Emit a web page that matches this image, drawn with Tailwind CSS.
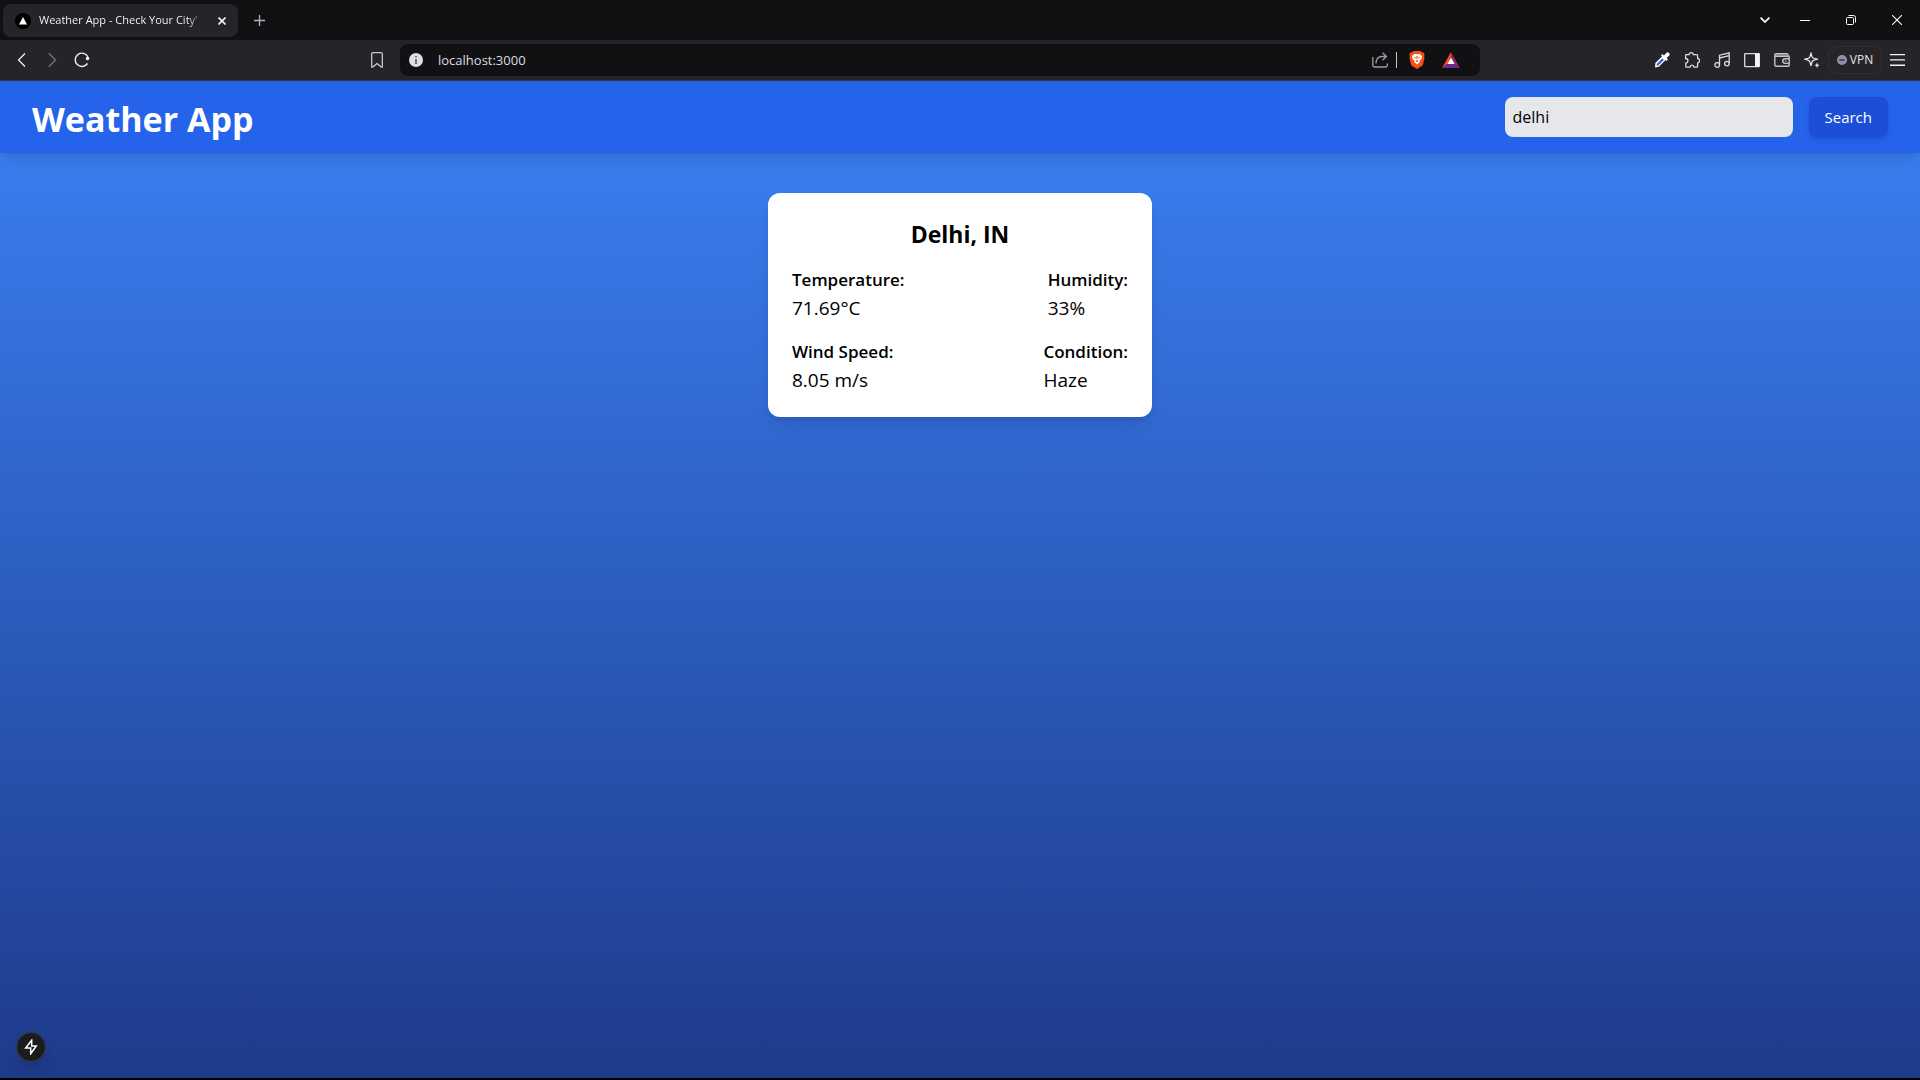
<!DOCTYPE html>
<html lang="en">
<head>
<meta charset="utf-8">
<meta name="viewport" content="width=device-width, initial-scale=1">
<title>Weather App - Check Your City's Weather</title>
<script src="https://cdn.jsdelivr.net/npm/@tailwindcss/browser@4"></script>
</head>
<body class="flex min-h-screen flex-col bg-black font-['Open_Sans','Noto_Sans',sans-serif] text-black">

<!-- Tab strip -->
<div class="flex h-10 items-center bg-[#111113] pl-[3px] text-white">
  <div class="mb-[-1px] flex h-[33px] w-[235px] items-center rounded-lg bg-[#252529] pl-3">
    <svg class="size-4 shrink-0" viewBox="0 0 16 16"><circle cx="8" cy="8" r="8" fill="#000"/><path d="M8 4l4 7.500H4z" fill="#fff"/></svg>
    <span class="ml-2 w-[165px] overflow-hidden whitespace-nowrap bg-linear-to-r from-white from-90% to-transparent bg-clip-text text-[11px] font-medium text-transparent">Weather App - Check Your City'</span>
    <button aria-label="Close tab" class="ml-2 flex size-5 items-center justify-center">
      <svg class="size-2" viewBox="0 0 8 8" stroke="#f4f4f5" stroke-width="1.600"><path d="M.5.5l7 7M7.500.5l-7 7"/></svg>
    </button>
  </div>
  <button aria-label="New tab" class="ml-[9px] flex size-6 items-center justify-center">
    <svg class="size-[11px]" viewBox="0 0 11 11" stroke="#b4b4b8" stroke-width="1.300"><path d="M5.500 0v11M0 5.500h11"/></svg>
  </button>
  <div class="ml-auto flex h-full">
    <button aria-label="Search tabs" class="flex w-[34px] items-center justify-center"><svg class="h-[6px] w-[10px]" viewBox="0 0 10 6" fill="none" stroke="#fff" stroke-width="1.700"><path d="M.6.6L5 5 9.400.6"/></svg></button>
    <button aria-label="Minimize" class="flex w-[46px] items-center justify-center"><svg class="h-[2px] w-[10px]" viewBox="0 0 10 2"><path d="M0 1h10v1H0z" fill="#fff"/></svg></button>
    <button aria-label="Restore" class="flex w-[46px] items-center justify-center"><svg class="size-[10px]" viewBox="0 0 10 10" fill="none" stroke="#fff"><rect x=".5" y="2.500" width="7" height="7" rx="1"/><path d="M2.500.5h5q2 0 2 2v5"/></svg></button>
    <button aria-label="Close" class="flex w-[46px] items-center justify-center"><svg class="size-[10px]" viewBox="0 0 10 10" stroke="#fff" stroke-width="1.100"><path d="M0 0l10 10M10 0L0 10"/></svg></button>
  </div>
</div>

<!-- Toolbar -->
<div class="flex h-[41px] items-center border-b border-[#37373c] bg-[#252529] text-[#e4e4e8]">
  <div class="flex w-[400px] shrink-0 items-center pl-[7px] pr-2">
    <button aria-label="Back" class="flex w-[30px] justify-center"><svg class="size-4" viewBox="0 0 16 16" fill="none" stroke="#f0f0f2" stroke-width="1.300"><path d="M11 1.500L4.500 8l6.500 6.500"/></svg></button>
    <button aria-label="Forward" class="flex w-[30px] justify-center"><svg class="size-4" viewBox="0 0 16 16" fill="none" stroke="#77777c" stroke-width="1.300"><path d="M5 1.500L11.500 8 5 14.500"/></svg></button>
    <button aria-label="Reload" class="flex w-[30px] justify-center"><svg class="size-4" viewBox="0 0 16 16" fill="none" stroke="#ececf0" stroke-width="1.400"><path d="M14 5A6.700 6.700 0 1 0 13.500 11.500"/><circle cx="13.600" cy="6.500" r="1.800" fill="#f4f4f6" stroke="none"/></svg></button>
    <button aria-label="Bookmark this page" class="ml-auto flex w-[30px] justify-center"><svg class="size-4" viewBox="0 0 16 16" fill="none" stroke="#c9c9cd" stroke-width="1.300" stroke-linejoin="round"><path d="M2.700 2q0-1.300 1.300-1.300h8q1.300 0 1.300 1.300v13.200h-.8L8 11.500l-4.500 3.700h-.8z"/></svg></button>
  </div>
  <div class="flex h-8 min-w-0 flex-1 items-center rounded-lg bg-[#111113] pl-[9px] pr-5">
    <svg class="size-[14px] shrink-0" viewBox="0 0 14 14"><circle cx="7" cy="7" r="7" fill="#dedee4"/><path d="M6.200 3h1.600v1.600H6.200zM6.200 6h1.600v5H6.200z" fill="#55555c"/></svg>
    <input aria-label="Address" value="localhost:3000" class="ml-[15px] min-w-0 flex-1 bg-transparent pt-px text-[13px] text-[#dcdce2] outline-none">
    <button aria-label="Share" class="mr-2"><svg class="size-4" viewBox="0 0 16 16" fill="none" stroke="#9d9da1" stroke-width="1.300"><path d="M.8 5v8q0 2 2 2h10.500q2 0 2-2v-1.500"/><path d="M4 11.500Q4 4.500 10 4.500h4M10.500.8l4 3.700-4 3.700"/></svg></button>
    <span class="h-4 w-px bg-[#c4c4c8]"></span>
    <button aria-label="Brave Shields" class="ml-3"><svg class="h-[18px] w-4" viewBox="0 0 16 18"><path d="M4.500 0h7l1.600 1.500 1.400.1 1.200 2-.7 1.300.6 1.500-1.500 6.500q-.4 1.400-1.700 2.400L8 18l-4.400-2.700Q2.300 14.300 1.900 12.900L.4 6.400 1 4.900.3 3.600l1.200-2 1.400-.1z" fill="#fb4f12"/><path d="M8 3.200l2.200-.4 2.900 2.500-.6 2.500-2 2.100.4 1.200L8 13.600l-2.900-2.500.4-1.200-2-2.100-.6-2.500 2.900-2.500z" fill="#fff"/><path d="M4.300 5.800l2.600.7-.5 1.300zM11.700 5.800l-2.600.7.5 1.300zM7.300 5h1.400L8.400 8.500h-.8zM6.300 10L8 9.300 9.700 10 8 11.300z" fill="#fb4f12"/></svg></button>
    <button aria-label="Brave Rewards" class="ml-[17px]"><svg class="h-4 w-[18px]" viewBox="0 0 18 16"><path d="M9 0L0 16l5.500-4L9 5z" fill="#ff4724"/><path d="M9 0l9 16-5.500-4L9 5z" fill="#9e1f63"/><path d="M0 16h18l-5.500-4h-7z" fill="#662d91"/><path d="M9 5.500L12.700 12H5.300z" fill="#fff"/></svg></button>
  </div>
  <div class="flex w-[440px] shrink-0 items-center justify-end pr-[7px]">
    <button aria-label="Color picker" class="flex w-[30px] justify-center"><svg class="size-4" viewBox="0 0 16 16"><path d="M8.200 4.200l3.600 3.600-7 7L1 15.600 1.400 11z" fill="#fff"/><path d="M8.300 6.500l1.500 1.500-5.300 5.300-2 .4.400-2z" fill="#3455d0"/><path d="M7 3.500l1.500-1.400 1.400 1.300L12.500.8q1.500-1 2.500.2 1.300 1.300.2 2.600l-2.500 2.500 1.200 1.400-1.400 1.400z" fill="#fff"/></svg></button>
    <button aria-label="Extensions" class="flex w-[30px] justify-center"><svg class="size-4" viewBox="0 0 16 16" fill="none" stroke="#dcdce0" stroke-width="1.300" stroke-linejoin="round"><path d="M1.800 2.700h3.400q-.1-2 2-2t2 2h3.400q1 0 1 1V6.500q2 .3 2 2.200t-2 2.200v3.300q0 1-1 1H10q-.3-2-2-2t-2 2H2.800q-1 0-1-1v-3q2.200-.5 2.200-2.500T1.500 6.500z"/></svg></button>
    <button aria-label="Media controls" class="flex w-[30px] justify-center"><svg class="size-4" viewBox="0 0 16 16" fill="none" stroke="#dcdce0" stroke-width="1.300"><path d="M5.500 13V3.200l9.700-2.400v10.500M5.500 6l9.700-2.300"/><circle cx="3.200" cy="13" r="2.300"/><circle cx="12.900" cy="11.600" r="2.300"/></svg></button>
    <button aria-label="Sidebar" class="flex w-[30px] justify-center"><svg class="size-4" viewBox="0 0 16 16"><rect x=".7" y="1.700" width="14.600" height="13" rx=".6" fill="none" stroke="#dcdce0" stroke-width="1.300"/><path d="M11 1.500h4.500v13.300H11z" fill="#f4f4f6"/></svg></button>
    <button aria-label="Wallet" class="flex w-[30px] justify-center"><svg class="size-4" viewBox="0 0 16 16" fill="none" stroke="#c4c4c8" stroke-width="1.400"><path d="M15 5.500V4.200H1M14 4V3q0-1.300-1.300-1.300H2.200Q.8 1.700.8 3v9.800q0 1.500 1.400 1.500h11.500q1.500 0 1.500-1.500V5.500q0-1.300-1.200-1.300M15 6.800h-4q-2.300.3-2.300 2.300t2.300 2.300h4M11 9.100h1.500"/><path d="M1.500 2.300h12.500v1.500H1.500z" fill="#9a9a9e" stroke="none"/></svg></button>
    <button aria-label="Leo AI" class="mr-[1px] flex w-[30px] justify-center"><svg class="size-4" viewBox="0 0 16 16" fill="none" stroke="#e8e8ec" stroke-width="1.300" stroke-linejoin="round"><path d="M7 .8Q8 5.600 9 6t4.500 1.200Q10 8.200 9 8.700T7 13.500Q6 9.300 5 8.700T.7 7.200Q4 6.500 5 6T7 .8z"/><path d="M13 10.500l.8 1.900 1.900.8-1.900.8-.8 1.900-.8-1.900-1.900-.8 1.900-.8z" fill="#e8e8ec" stroke="none"/></svg></button>
    <button class="flex h-7 w-[54px] items-center justify-center gap-[3px] rounded-lg border border-[#303034] text-[12px]"><svg class="size-[10px]" viewBox="0 0 10 10"><circle cx="5" cy="5" r="5" fill="#8f90a6"/><path d="M2.300 4.300h5.400v1.400H2.300z" fill="#303038"/></svg>VPN</button>
    <button aria-label="Menu" class="flex w-[31px] justify-center"><svg class="h-3 w-[15px]" viewBox="0 0 15 12"><path d="M0 0h15v1.300H0zM0 5.300h15v1.300H0zM0 10.600h15v1.300H0z" fill="#f4f4f6"/></svg></button>
  </div>
</div>

<!-- Page -->
<div class="relative mb-[2px] flex-1 bg-[linear-gradient(to_bottom,#3b82f6,#1e3a8a)]">
  <header class="flex h-[72px] items-center justify-between bg-[#2563eb] px-8 shadow-lg">
    <h1 class="pt-1 text-[34px] leading-10 font-bold text-white">Weather App</h1>
    <form class="flex gap-4" onsubmit="return false">
      <input type="text" aria-label="City" value="delhi" class="h-10 w-72 rounded-lg bg-[#e5e7eb] p-2 text-base text-black outline-none">
      <button class="h-10 rounded-lg bg-[#1d4ed8] px-4 text-[15px] text-white shadow-md">Search</button>
    </form>
  </header>
  <main class="px-4 pt-10">
    <section class="mx-auto max-w-sm rounded-xl bg-white px-6 pt-[25px] pb-[23px] shadow-lg">
      <h2 class="mb-4 text-center text-[23px] leading-8 font-bold">Delhi, IN</h2>
      <dl class="flex flex-col gap-4">
        <div class="flex justify-between">
          <div><dt class="text-[17px] leading-7 font-semibold">Temperature:</dt><dd class="text-[19px] leading-7">71.69°C</dd></div>
          <div><dt class="text-[17px] leading-7 font-semibold">Humidity:</dt><dd class="text-[19px] leading-7">33%</dd></div>
        </div>
        <div class="flex justify-between">
          <div><dt class="text-[17px] leading-7 font-semibold">Wind Speed:</dt><dd class="text-[19px] leading-7">8.05 m/s</dd></div>
          <div><dt class="text-[17px] leading-7 font-semibold">Condition:</dt><dd class="text-[19px] leading-7">Haze</dd></div>
        </div>
      </dl>
    </section>
  </main>
  <button aria-label="Open developer tools" class="absolute bottom-4 left-4 flex size-[30px] items-center justify-center rounded-full border border-[#3b3b3b] bg-[#1c1c1e] shadow-lg">
    <svg class="size-4" viewBox="0 0 16 16" fill="none" stroke="#fff" stroke-width="1.500" stroke-linejoin="miter"><path d="M8.700 1.200L2.700 9h5v5.800L13.300 7H8.700z"/></svg>
  </button>
</div>
</body>
</html>
